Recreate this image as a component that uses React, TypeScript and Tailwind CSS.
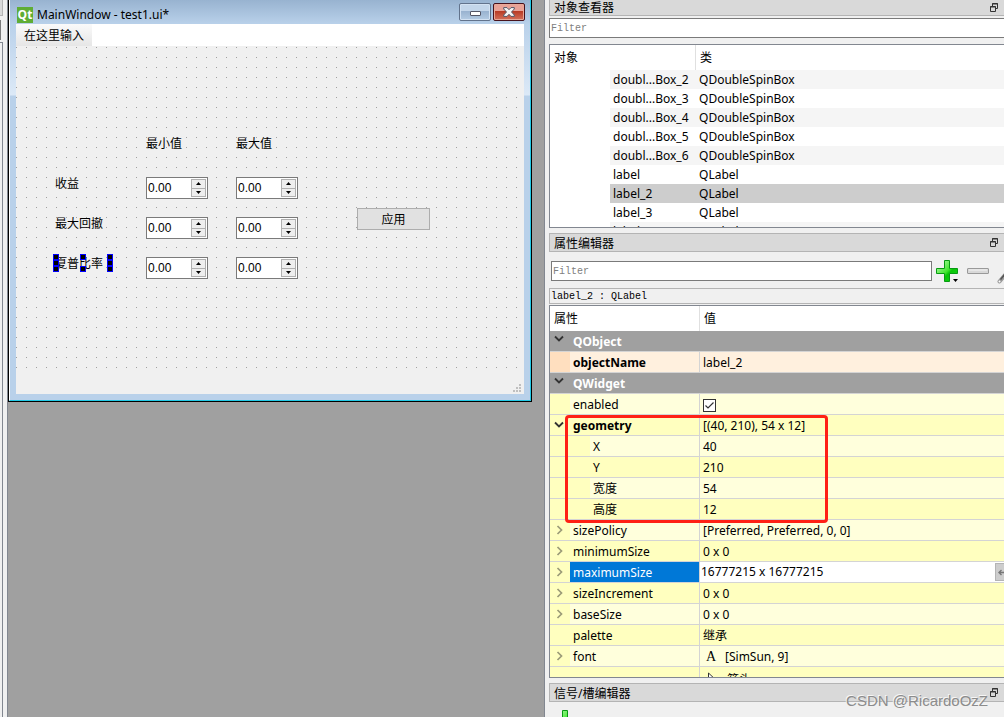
import { useState, type ReactNode } from "react";
import clsx from "clsx";

const OBJECTS = [
  { name: "doubl...Box_2", type: "QDoubleSpinBox" },
  { name: "doubl...Box_3", type: "QDoubleSpinBox" },
  { name: "doubl...Box_4", type: "QDoubleSpinBox" },
  { name: "doubl...Box_5", type: "QDoubleSpinBox" },
  { name: "doubl...Box_6", type: "QDoubleSpinBox" },
  { name: "label", type: "QLabel" },
  { name: "label_2", type: "QLabel" },
  { name: "label_3", type: "QLabel" },
  { name: "label_4", type: "QLabel" },
];

interface Property {
  name: string;
  value: ReactNode;
  arrow?: "open" | "closed";
  tone: "light" | "dark" | "orange";
  bold?: boolean;
  child?: boolean;
}

const WIDGET_PROPERTIES: Property[] = [
  { name: "enabled", value: <CheckBox />, tone: "light" },
  { name: "geometry", value: "[(40, 210), 54 x 12]", arrow: "open", tone: "dark", bold: true },
  { name: "X", value: "40", tone: "light", child: true },
  { name: "Y", value: "210", tone: "dark", child: true },
  { name: "宽度", value: "54", tone: "light", child: true },
  { name: "高度", value: "12", tone: "dark", child: true },
  { name: "sizePolicy", value: "[Preferred, Preferred, 0, 0]", arrow: "closed", tone: "light" },
  { name: "minimumSize", value: "0 x 0", arrow: "closed", tone: "dark" },
  { name: "maximumSize", value: "16777215 x 16777215", arrow: "closed", tone: "light" },
  { name: "sizeIncrement", value: "0 x 0", arrow: "closed", tone: "dark" },
  { name: "baseSize", value: "0 x 0", arrow: "closed", tone: "light" },
  { name: "palette", value: "继承", tone: "dark" },
  { name: "font", value: <FontValue />, arrow: "closed", tone: "light" },
  { name: "", value: <CursorValue />, tone: "dark" },
];

function Chevron({ state }: { state: "open" | "closed" }) {
  return state === "open" ? (
    <svg className="ml-1 block" width="10" height="8" viewBox="0 0 10 8" fill="none">
      <path d="M1 1.5 5 5.5 9 1.5" stroke="#333" strokeWidth="1.8" />
    </svg>
  ) : (
    <svg className="ml-1.5 block" width="8" height="10" viewBox="0 0 8 10" fill="none">
      <path d="M1.5 1 5.5 5 1.5 9" stroke="#9b9b78" strokeWidth="1.7" />
    </svg>
  );
}

function CheckBox() {
  return (
    <span className="relative block size-[13px]">
      <input
        aria-label="enabled"
        className="block size-[13px] appearance-none border border-[#333] bg-white"
        defaultChecked
        type="checkbox"
      />
      <svg className="pointer-events-none absolute inset-0" width="13" height="13" fill="none">
        <path d="M2.5 6.5 5 9 10.5 3.5" stroke="#333" strokeWidth="1.2" />
      </svg>
    </span>
  );
}

function FontValue() {
  return (
    <span className="flex items-center">
      <span className="w-[22px] pl-[3px] font-['Liberation_Serif',serif] text-[14px]">A</span>
      [SimSun, 9]
    </span>
  );
}

function CursorValue() {
  return (
    <span className="flex items-center pt-0.5">
      <svg className="mr-2 ml-1" width="12" height="17" viewBox="0 0 12 17">
        <path d="M1.5 1v12l3-2.5 2 4.5 2-1-2-4.5h4z" fill="#fff" stroke="#333" />
      </svg>
      箭头
    </span>
  );
}

function PlusIcon({ id }: { id: string }) {
  return (
    <svg className="block" width="22" height="22" viewBox="0 0 22 22">
      <defs>
        <linearGradient id={id} x1="0" y1="0" x2="1" y2="1">
          <stop offset="0" stopColor="#c4ffbd" />
          <stop offset="0.5" stopColor="#42e62f" />
          <stop offset="0.6" stopColor="#08c408" />
          <stop offset="1" stopColor="#12d812" />
        </linearGradient>
      </defs>
      <path
        d="M8.5.5h5v8h8v5h-8v8h-5v-8h-8v-5h8z"
        fill={`url(#${id})`}
        stroke="#079a12"
        strokeLinejoin="round"
      />
    </svg>
  );
}

function DockTitle({ title, flush }: { title: string; flush?: boolean }) {
  return (
    <div
      className={clsx(
        "flex shrink-0 items-center justify-between border border-r-0 border-[#b4b4b4] bg-[#d9d9d9] pr-1.5 pl-1",
        flush ? "h-4 border-t-0" : "h-[19px]",
      )}
    >
      <h2 className={clsx(!flush && "pt-0.5")}>{title}</h2>
      <button aria-label="浮动" type="button">
        <svg className="block" width="8" height="9" viewBox="0 0 8 9" fill="none" stroke="#333">
          <path d="M2.5 3V.5h5v5H5.500M2 1h6" />
          <path d="M.5 3.5h5v5h-5zM0 4h6" />
        </svg>
      </button>
    </div>
  );
}

function SpinBox({ label }: { label: string }) {
  const [value, setValue] = useState("0.00");

  function step(delta: number) {
    setValue(Math.max(0, Number(value) + delta).toFixed(2));
  }

  return (
    <div className="mt-[9px] flex h-[22px] w-[62px] border border-[#7a7a7a] bg-white">
      <input
        aria-label={label}
        className="min-w-0 flex-1 bg-transparent pl-px font-['Liberation_Sans',sans-serif] outline-none"
        onChange={(e) => setValue(e.target.value)}
        value={value}
      />
      <div className="my-px mr-px flex w-[15px] flex-col">
        <button
          aria-label={`${label} +`}
          className="flex flex-1 items-center justify-center border border-[#b0b0b0] bg-[#eee]"
          onClick={() => step(1)}
          type="button"
        >
          <svg width="5" height="3">
            <path d="M2.5 0 5 3H0z" />
          </svg>
        </button>
        <button
          aria-label={`${label} -`}
          className="flex flex-1 items-center justify-center border border-t-0 border-[#b0b0b0] bg-[#eee]"
          onClick={() => step(-1)}
          type="button"
        >
          <svg width="5" height="3">
            <path d="M0 0h5L2.5 3z" />
          </svg>
        </button>
      </div>
    </div>
  );
}

function SelectionHandles() {
  return (
    <span className="pointer-events-none absolute top-1.5 -left-0.5 flex h-[18px] w-[60px] justify-between">
      {[3, 2, 3].map((count, column) => (
        <span className="flex flex-col justify-between" key={column}>
          {Array.from({ length: count }, (_, i) => (
            <span className="size-1.5 border border-[#0000ff] bg-black" key={i} />
          ))}
        </span>
      ))}
    </span>
  );
}

function FormRow({ label, selected, children }: { label: string; selected?: boolean; children?: ReactNode }) {
  return (
    <>
      <span className="relative h-10 leading-8">
        {label}
        {selected ? <SelectionHandles /> : null}
      </span>
      <SpinBox label={`${label} 最小值`} />
      <SpinBox label={`${label} 最大值`} />
      <div>{children}</div>
    </>
  );
}

function FormWindow() {
  return (
    <section className="mr-3 border border-t-0 border-black">
      <div className="border-r border-b border-l border-r-[#22c9e6] border-b-[#22c9e6] border-l-white bg-[#b9d1ea] bg-[linear-gradient(#b9d1ea_24px,#dce9f7_95px,#b9d1ea_96px)]">
        <header className="flex h-6 items-end bg-linear-to-b from-[#98b3d0] to-[#b9d1ea] pr-[5px] pb-px pl-[7px]">
          <span className="flex size-4 items-center justify-center bg-[#5fad34] font-['Open_Sans',sans-serif] text-[12px] font-bold text-white">
            Qt
          </span>
          <h1 className="flex-1 pl-1">MainWindow - test1.ui*</h1>
          <div className="flex gap-0.5 self-start pt-[3px]">
            <button
              aria-label="最小化"
              className="flex h-[18px] w-8 items-center justify-center rounded-xs border border-[#62738c] bg-[linear-gradient(#c3d6ea_45%,#98b2cf_45%,#b4cce4)] shadow-[inset_0_0_0_1px_#d3e2f2]"
              type="button"
            >
              <svg className="mt-0.5" width="11" height="5">
                <rect x="0.5" y="0.5" width="10" height="4" rx="0.5" fill="#fff" stroke="#535666" />
              </svg>
            </button>
            <button
              aria-label="关闭"
              className="flex h-[18px] w-8 items-center justify-center rounded-xs border border-[#47121c] bg-[linear-gradient(#e9a297_45%,#b83a24_45%,#d3705b)] shadow-[inset_0_0_0_1px_#e8a898]"
              type="button"
            >
              <svg width="12" height="10" viewBox="0 0 12 10">
                <path
                  d="M.7.6H4l2 2.1L8 .6h3.3V2L8.5 5l2.8 3v1.4H8L6 7.3 4 9.4H.7V8l2.8-3L.7 2z"
                  fill="#f4f4f4"
                  stroke="#535666"
                />
              </svg>
            </button>
          </div>
        </header>

        <div className="mx-1.5 pb-1.5">
          <nav className="flex h-[22px] bg-white">
            <button className="bg-linear-to-b from-[#fafafa] to-[#e6e6e6] px-2 pt-0.5" type="button">
              在这里输入
            </button>
          </nav>
          <div className="bg-[#f0f0f0]">
            <div className="relative h-[322px]">
              {/* grid dots every 10px */}
              <svg className="absolute inset-0 size-full" aria-hidden="true">
                <defs>
                  <pattern id="dots" width="10" height="10" patternUnits="userSpaceOnUse">
                    <rect y="1" width="1" height="1" fill="#a0a0a0" />
                  </pattern>
                </defs>
                <rect width="100%" height="100%" fill="url(#dots)" />
              </svg>
              <div className="relative grid grid-cols-[91px_90px_121px_auto] justify-start pt-[87px] pl-[39px]">
                <span className="col-start-2 h-[35px] leading-[22px]">最小值</span>
                <span className="col-span-2 h-[35px] leading-[22px]">最大值</span>
                <FormRow label="收益" />
                <FormRow label="最大回撤">
                  <button className="h-[22px] w-[73px] border border-[#adadad] bg-[#e1e1e1] pt-0.5" type="button">
                    应用
                  </button>
                </FormRow>
                <FormRow label="夏普比率" selected />
              </div>
            </div>
            <footer className="flex h-[26px] items-end justify-end pr-0.5 pb-px">
              <svg width="9" height="9" fill="#bfbfbf">
                <path d="M6 0h2v2H6zM3 3h2v2H3zM6 3h2v2H6zM0 6h2v2H0zM3 6h2v2H3zM6 6h2v2H6z" />
              </svg>
            </footer>
          </div>
        </div>
      </div>
    </section>
  );
}

function ObjectInspector() {
  return (
    <div className="h-[184px] shrink-0 overflow-hidden border border-r-0 border-[#828790] bg-white">
      <table className="w-full table-fixed border-separate border-spacing-0 text-left">
        <colgroup>
          <col className="w-[60px]" />
          <col className="w-[86px]" />
          <col />
        </colgroup>
        <thead>
          <tr className="h-[25px]">
            <th className="border-r border-[#e0e0e0] p-0 pl-1 font-normal" colSpan={2}>
              对象
            </th>
            <th className="p-0 pl-1 font-normal">类</th>
          </tr>
        </thead>
        <tbody>
          {OBJECTS.map((object, i) => (
            <tr className="h-[19px] leading-[19px]" key={object.name}>
              <td className="p-0" />
              <td
                className={clsx(
                  "p-0 pl-[3px] whitespace-nowrap",
                  object.name === "label_2" ? "bg-[#cdcdcd]" : i % 2 === 0 && "bg-[#f5f5f5]",
                )}
              >
                {object.name}
              </td>
              <td
                className={clsx(
                  "p-0 pl-[3px]",
                  object.name === "label_2" ? "bg-[#cdcdcd]" : i % 2 === 0 && "bg-[#f5f5f5]",
                )}
              >
                {object.type}
              </td>
            </tr>
          ))}
        </tbody>
      </table>
    </div>
  );
}

function GroupRow({ name }: { name: string }) {
  return (
    <tr className="h-[21px] bg-[#a0a0a0] leading-[18px] font-bold text-white">
      <td className="border-b border-[#d4d4d4] p-0 pb-1">
        <Chevron state="open" />
      </td>
      <td className="border-b border-[#d4d4d4] p-0 pt-0.5 pl-[3px]" colSpan={3}>
        {name}
      </td>
    </tr>
  );
}

function PropertyRow({ property }: { property: Property }) {
  const { name, value, arrow, tone, bold, child } = property;
  const active = name === "maximumSize";
  const indent = tone === "orange" ? "bg-[#ffdfbf]" : "bg-[#ffffbf]";

  return (
    <tr
      className={clsx(
        "h-[21px] leading-[18px]",
        tone === "light" && "bg-[#ffffdc]",
        tone === "dark" && "bg-[#ffffbf]",
        tone === "orange" && "bg-[#fff0de]",
      )}
    >
      <td className={clsx("border-b border-[#d4d4d4] p-0", indent)}>
        {arrow ? <Chevron state={arrow} /> : null}
      </td>
      {child ? <td className={clsx("border-b border-[#d4d4d4] p-0", indent)} /> : null}
      <td
        className={clsx(
          "border-r border-b border-[#d4d4d4] p-0 pt-0.5 pl-[3px]",
          bold && "font-bold",
          active && "bg-[#0078d7] text-white",
        )}
        colSpan={child ? 1 : 2}
      >
        {name}
      </td>
      {active ? (
        <td className="border-b border-[#d4d4d4] bg-white p-0">
          <div className="flex h-5 items-center">
            <input
              aria-label={name}
              className="h-[18px] min-w-0 flex-1 pl-px outline-none"
              defaultValue={String(value)}
            />
            <button
              aria-label="重置"
              className="flex h-[18px] w-[9px] items-center justify-end border border-r-0 border-[#b4b4b4] bg-[#cdcdcd]"
              type="button"
            >
              <svg width="6" height="7" viewBox="0 0 6 7" fill="none" stroke="#777">
                <path d="M6 3.5H1.5M3.5 1 1 3.5 3.5 6" strokeWidth="1.4" />
              </svg>
            </button>
          </div>
        </td>
      ) : (
        <td className="border-b border-[#d4d4d4] p-0 pt-0.5 pl-[3px]">{value}</td>
      )}
    </tr>
  );
}

function PropertyEditor() {
  return (
    <div className="relative min-h-0 flex-1 overflow-hidden border border-r-0 border-[#828790] bg-white">
      <table className="w-full table-fixed border-separate border-spacing-0 text-left">
        <colgroup>
          <col className="w-5" />
          <col className="w-5" />
          <col className="w-[110px]" />
          <col />
        </colgroup>
        <thead>
          <tr className="h-[25px]">
            <th className="border-r border-[#e0e0e0] p-0 pl-1 font-normal" colSpan={3}>
              属性
            </th>
            <th className="p-0 pl-1 font-normal">值</th>
          </tr>
        </thead>
        <tbody>
          <GroupRow name="QObject" />
          <PropertyRow property={{ name: "objectName", value: "label_2", tone: "orange", bold: true }} />
          <GroupRow name="QWidget" />
          {WIDGET_PROPERTIES.map((property) => (
            <PropertyRow key={property.name} property={property} />
          ))}
        </tbody>
      </table>
      <div className="pointer-events-none absolute top-[109px] left-[15px] h-[108px] w-[263px] rounded-sm border-3 border-[#ff2015]" />
    </div>
  );
}

export default function App() {
  return (
    <main className="relative flex h-screen overflow-hidden bg-[#a0a0a0] font-['Noto_Sans','Noto_Sans_CJK_SC',sans-serif] text-[12px] leading-4 text-black">
      {/* right edge of the widget box dock */}
      <div className="flex w-2 shrink-0 flex-col border-r border-[#828790] bg-[#f0f0f0]">
        <div className="h-4 w-[3px] border-r border-b border-[#b4b4b4] bg-[#d9d9d9]" />
        <div className="mt-1 h-5 w-px bg-[#7a7a7a]" />
        <div className="mt-0.5 w-[3px] flex-1 border-t border-r border-[#828790] bg-[#f0f0f0]" />
      </div>

      <div className="w-[536px] shrink-0">
        <FormWindow />
      </div>

      <aside className="flex min-w-0 flex-1 flex-col border-l border-[#828790] bg-[#f0f0f0] pl-1">
        <DockTitle title="对象查看器" flush />
        <input
          aria-label="过滤对象"
          className="mt-0.5 h-5 shrink-0 border border-r-0 border-[#7a7a7a] bg-white pl-px font-['Liberation_Mono',monospace] text-[10px] outline-none placeholder:text-[#808080]"
          placeholder="Filter"
        />
        <div className="h-1.5 shrink-0" />
        <ObjectInspector />
        <div className="h-[5px] shrink-0" />
        <DockTitle title="属性编辑器" />
        <div className="flex h-9 shrink-0 items-center pt-0.5 pl-0.5">
          <input
            aria-label="过滤属性"
            className="h-5 min-w-0 flex-1 border border-[#7a7a7a] bg-white pl-px font-['Liberation_Mono',monospace] text-[10px] outline-none placeholder:text-[#808080]"
            placeholder="Filter"
          />
          <button aria-label="添加" className="relative ml-1" type="button">
            <PlusIcon id="plus-property" />
            <svg className="absolute right-0 bottom-0" width="5" height="3">
              <path d="M0 0h5L2.5 3z" />
            </svg>
          </button>
          <button aria-label="删除" className="ml-[9px]" type="button">
            <svg className="block" width="22" height="6">
              <rect x="0.5" y="0.5" width="21" height="5" rx="0.5" fill="#d8d8d8" stroke="#999" />
              <path d="M2 2h18" stroke="#f4f4f4" />
            </svg>
          </button>
          <button aria-label="配置" className="ml-2 w-[7px] overflow-hidden pt-3" type="button">
            <svg className="block" width="7" height="13" viewBox="0 0 7 13" fill="none">
              <path d="M2.5 10.5 8 4" stroke="#999" strokeWidth="4" strokeLinecap="round" />
              <path d="M3.5 8.5 8 3" stroke="#555" strokeWidth="1.5" />
              <circle cx="2.5" cy="10.5" r="1" fill="#fff" />
            </svg>
          </button>
        </div>
        <div className="mb-px flex h-4 shrink-0 items-center border border-r-0 border-[#b4b4b4] pt-0.5 pl-px font-['Liberation_Mono',monospace] text-[10px] leading-3">
          label_2 : QLabel
        </div>
        <PropertyEditor />
        <div className="h-[5px] shrink-0" />
        <DockTitle title="信号/槽编辑器" />
        <div className="h-[15px] shrink-0 overflow-hidden pt-2 pl-[5px]">
          <button aria-label="添加连接" className="block" type="button">
            <PlusIcon id="plus-signal" />
          </button>
        </div>
      </aside>

      <p className="pointer-events-none absolute right-4 bottom-1.5 font-['Liberation_Sans',sans-serif] text-[15px] leading-5 text-[#8c8c8c] [text-shadow:-1px_-1px_0_#f6f6f6]">
        CSDN @RicardoOzZ
      </p>
    </main>
  );
}
